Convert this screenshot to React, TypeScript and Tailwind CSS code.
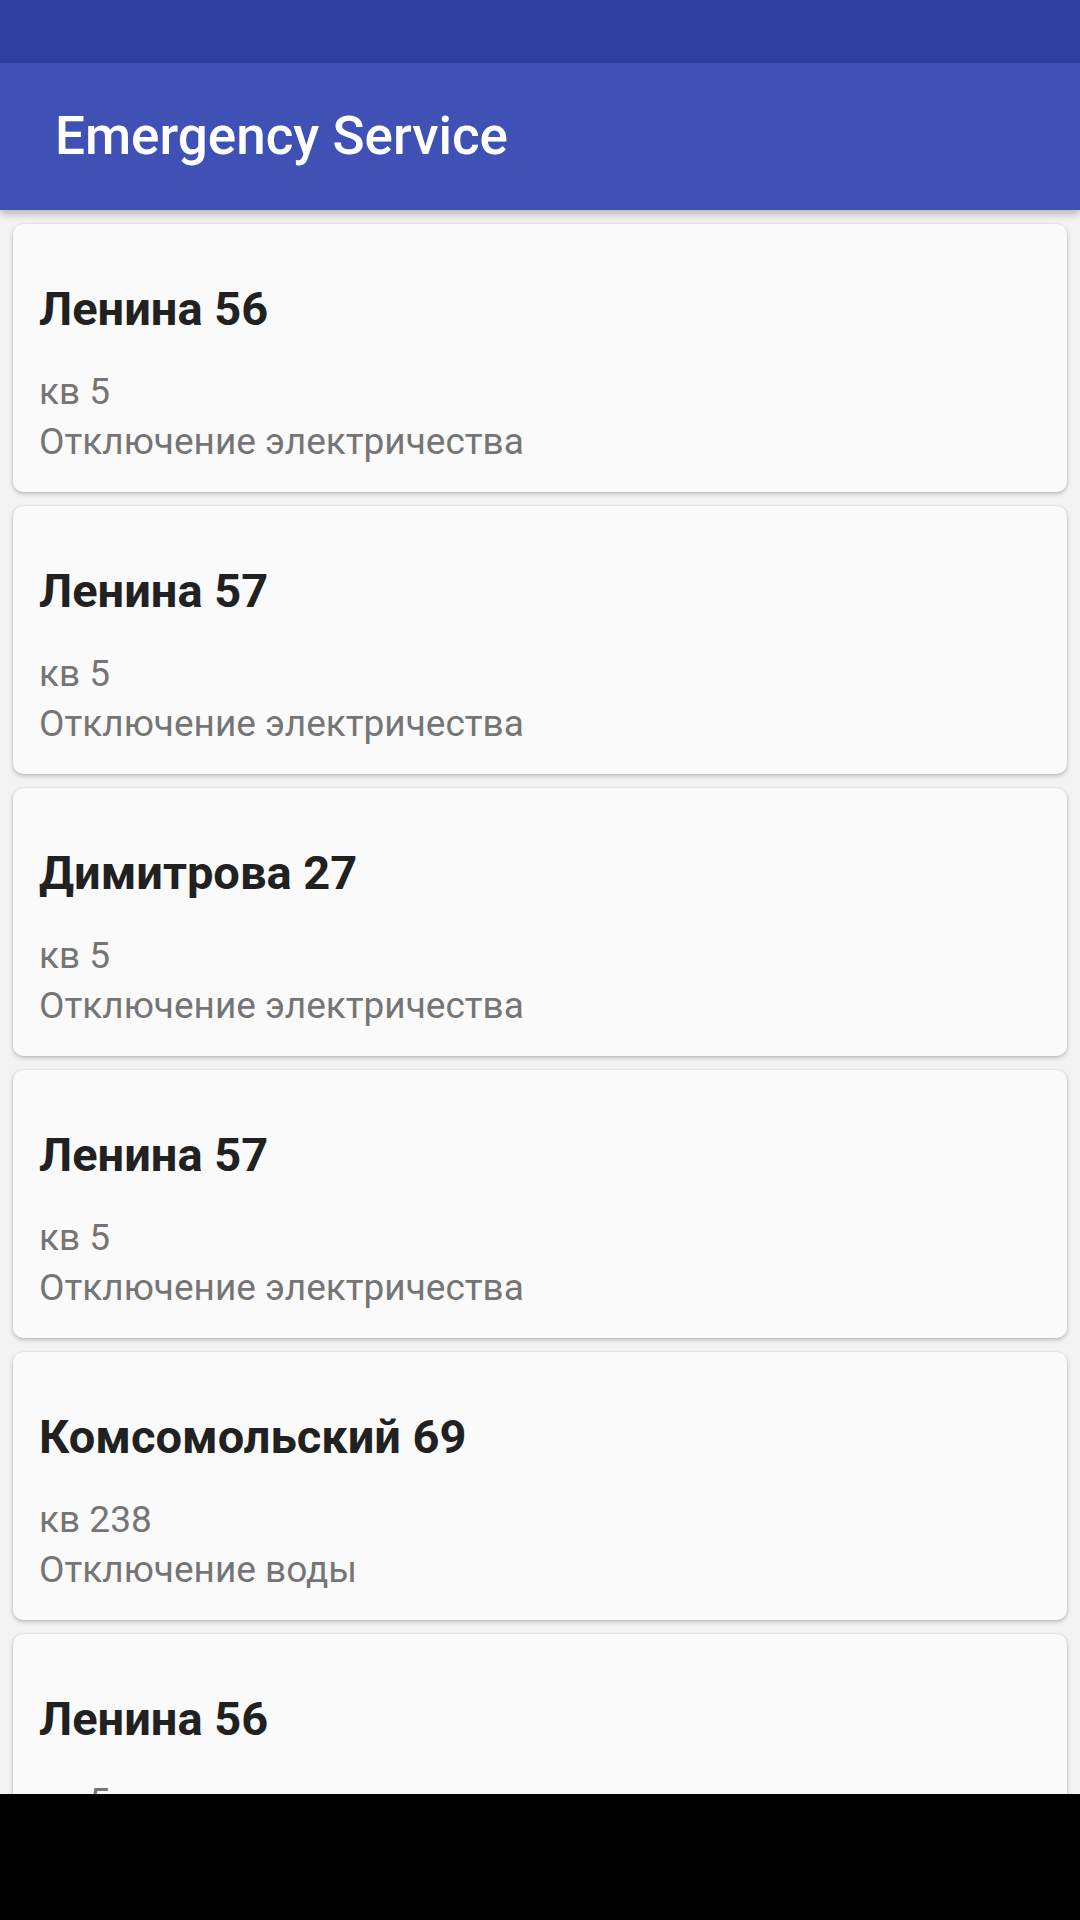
const calls = [
  { street: 'Ленина 56', flat: 'кв 5', issue: 'Отключение электричества' },
  { street: 'Ленина 57', flat: 'кв 5', issue: 'Отключение электричества' },
  { street: 'Димитрова 27', flat: 'кв 5', issue: 'Отключение электричества' },
  { street: 'Ленина 57', flat: 'кв 5', issue: 'Отключение электричества' },
  { street: 'Комсомольский 69', flat: 'кв 238', issue: 'Отключение воды' },
  { street: 'Ленина 56', flat: 'кв 5', issue: 'Отключение электричества' },
];

export default function App() {
  return (
    <div className="flex h-[1920px] w-[1080px] flex-col overflow-hidden bg-[#f3f3f3] font-['Roboto',sans-serif]">
      {/* status bar */}
      <div className="h-[63px] shrink-0 bg-[#303f9f]" />

      {/* toolbar */}
      <div className="relative z-10 flex h-[147px] shrink-0 items-center bg-[#3f51b5] pl-[55px] shadow-[0_4px_8px_rgba(0,0,0,0.25)]">
        <h1 className="text-[53px] font-medium leading-none text-white">Emergency Service</h1>
      </div>

      {/* list */}
      <div className="flex min-h-0 flex-1 flex-col gap-[14px] overflow-hidden px-[13px] pt-[14px]">
        {calls.map((c, i) => (
          <div
            key={i}
            className="h-[268px] shrink-0 rounded-[10px] bg-[#fafafa] px-[26px] pt-[57px] shadow-[0_2px_4px_rgba(0,0,0,0.22),0_0_2px_rgba(0,0,0,0.12)]"
          >
            <p className="text-[47px] font-bold leading-[56px] text-[#212121]">{c.street}</p>
            <p className="mt-[30px] text-[37px] leading-[50px] text-[#757575]">{c.flat}</p>
            <p className="text-[37px] leading-[50px] text-[#757575]">{c.issue}</p>
          </div>
        ))}
      </div>

      {/* nav bar area */}
      <div className="h-[126px] shrink-0 bg-black" />
    </div>
  );
}
